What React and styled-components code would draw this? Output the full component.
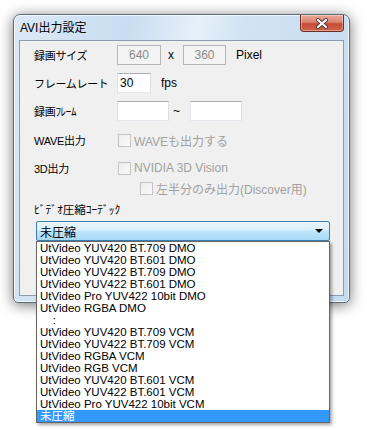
import React from 'react'
import styled, { createGlobalStyle } from 'styled-components'

const GlobalStyle = createGlobalStyle`
  html, body {
    margin: 0;
    padding: 0;
    background: #ffffff;
  }
  body {
    font-family: "Liberation Sans", "Noto Sans CJK JP", sans-serif;
    font-size: 12px;
    color: #000;
  }
`

const codecs = [
  'UtVideo YUV420 BT.709 DMO',
  'UtVideo YUV420 BT.601 DMO',
  'UtVideo YUV422 BT.709 DMO',
  'UtVideo YUV422 BT.601 DMO',
  'UtVideo Pro YUV422 10bit DMO',
  'UtVideo RGBA DMO',
  '\u00a0\u00a0\u00a0\u00a0:',
  'UtVideo YUV420 BT.709 VCM',
  'UtVideo YUV422 BT.709 VCM',
  'UtVideo RGBA VCM',
  'UtVideo RGB VCM',
  'UtVideo YUV420 BT.601 VCM',
  'UtVideo YUV422 BT.601 VCM',
  'UtVideo Pro YUV422 10bit VCM',
  '未圧縮',
]

export default function App() {
  return (
    <Stage>
      <GlobalStyle />
      <Window>
        <TitleBar>
          <Title>AVI出力設定</Title>
          <CloseButton aria-label='close'>
            <svg width="14" height="11" viewBox="0 0 14 11">
              <path d="M3 2 L11 9 M11 2 L3 9" stroke="#4a3a38" strokeWidth="4" strokeLinecap="round" />
              <path d="M3 2 L11 9 M11 2 L3 9" stroke="#ffffff" strokeWidth="2.2" strokeLinecap="round" />
            </svg>
          </CloseButton>
        </TitleBar>
        <Client>
          <Row $h={28}>
            <Label>録画サイズ</Label>
            <Field $w={44} $disabled $center>640</Field>
            <Sep $l={7} $r={9}>x</Sep>
            <Field $w={43} $disabled $center>360</Field>
            <Sep $l={10}>Pixel</Sep>
          </Row>
          <Row $h={28}>
            <Label>フレームレート</Label>
            <Field $w={34}>30</Field>
            <Sep $l={10}>fps</Sep>
          </Row>
          <Row $h={28}>
            <Label>録画ﾌﾚｰﾑ</Label>
            <Field $w={52} />
            <Sep $l={4} $r={10}>~</Sep>
            <Field $w={52} />
          </Row>
          <Row $h={30}>
            <Label>WAVE出力</Label>
            <Check>
              <Box />
              WAVEも出力する
            </Check>
          </Row>
          <Row $h={26}>
            <Label>3D出力</Label>
            <Check>
              <Box />
              NVIDIA 3D Vision
            </Check>
          </Row>
          <Row $h={14}>
            <Label />
            <Check $indent={22}>
              <Box />
              左半分のみ出力(Discover用)
            </Check>
          </Row>
          <CodecLabel>ﾋﾞﾃﾞｵ圧縮ｺｰﾃﾞｯｸ</CodecLabel>
          <Combo>
            <ComboText>未圧縮</ComboText>
            <Arrow />
            <DropList>
              {codecs.map((c, i) => (
                <Item key={i} $selected={i === codecs.length - 1}>{c}</Item>
              ))}
            </DropList>
          </Combo>
        </Client>
      </Window>
    </Stage>
  )
}

const Stage = styled.div`
  box-sizing: border-box;
  min-height: 430px;
  padding: 14px 0 0 13px;
`

const Window = styled.div`
  position: relative;
  box-sizing: border-box;
  width: 337px;
  height: 289px;
  border: 1px solid #5d6b7b;
  border-radius: 7px 7px 5px 5px;
  padding: 0 5px 6px 5px;
  display: flex;
  flex-direction: column;
  background: linear-gradient(100deg, #dbe9f6 0%, #c8ddf1 30%, #e6f0f9 48%, #d2e3f4 60%, #c4dbf0 100%);
  box-shadow: 0 2px 14px rgba(0, 0, 0, 0.55), inset 0 0 0 1px rgba(255, 255, 255, 0.7);
`

const TitleBar = styled.div`
  display: flex;
  align-items: flex-start;
  height: 25px;
`

const Title = styled.div`
  padding: 6px 0 0 1px;
  font-size: 12px;
  line-height: 14px;
  color: #000;
`

const CloseButton = styled.div`
  margin-left: auto;
  box-sizing: border-box;
  width: 44px;
  height: 17px;
  border: 1px solid #6e3026;
  border-top: none;
  border-radius: 0 0 4px 4px;
  display: flex;
  align-items: center;
  justify-content: center;
  background: linear-gradient(#eaa999 0%, #dc8470 45%, #c64a33 55%, #d2654d 100%);
  box-shadow: inset 0 0 0 1px rgba(255, 255, 255, 0.35);
`

const Client = styled.div`
  flex: 1;
  border: 1px solid #8d9cad;
  background: #f0f0f0;
  display: flex;
  flex-direction: column;
`

const Row = styled.div`
  display: flex;
  align-items: center;
  height: ${(p) => p.$h}px;
  padding-left: 14px;
`

const Label = styled.span`
  width: 83px;
  flex-shrink: 0;
  white-space: nowrap;
  font-size: 11px;
  letter-spacing: -0.3px;
`

const Field = styled.div`
  box-sizing: border-box;
  width: ${(p) => p.$w}px;
  height: 20px;
  line-height: 18px;
  padding: 0 2px;
  border: 1px solid ${(p) => (p.$disabled ? '#b5b5b5' : '#abadb3')};
  border-color: ${(p) => (p.$disabled ? '#b5b5b5' : '#abadb3 #dbdfe6 #e3e9ef #e2e3ea')};
  background: ${(p) => (p.$disabled ? '#f4f4f4' : '#ffffff')};
  color: ${(p) => (p.$disabled ? '#8a8a8a' : '#000')};
  text-align: ${(p) => (p.$center ? 'center' : 'left')};
`

const Sep = styled.span`
  margin-left: ${(p) => p.$l || 0}px;
  margin-right: ${(p) => p.$r || 0}px;
`

const Check = styled.div`
  display: flex;
  align-items: center;
  gap: 3px;
  margin-left: ${(p) => (p.$indent || 0) + 1}px;
  color: #a0a0a0;
  white-space: nowrap;
`

const Box = styled.span`
  box-sizing: border-box;
  width: 13px;
  height: 13px;
  border: 1px solid #c4c4c4;
  background: linear-gradient(135deg, #ececec, #fbfbfb);
`

const CodecLabel = styled.div`
  margin-top: 4px;
  height: 22px;
  line-height: 22px;
  padding-left: 14px;
  font-size: 11.5px;
`

const Combo = styled.div`
  position: relative;
  box-sizing: border-box;
  margin-left: 16px;
  width: 294px;
  height: 20px;
  border: 1px solid #3c7fb1;
  border-radius: 2px;
  display: flex;
  align-items: center;
  padding: 0 6px 0 3px;
  background: linear-gradient(#eaf6fd 0%, #d9f0fc 45%, #bee6fd 50%, #a7d9f5 100%);
`

const ComboText = styled.span`
  flex: 1;
  font-size: 12px;
`

const Arrow = styled.span`
  width: 0;
  height: 0;
  border-left: 4px solid transparent;
  border-right: 4px solid transparent;
  border-top: 4px solid #000;
`

const DropList = styled.div`
  position: absolute;
  top: 19px;
  left: -1px;
  box-sizing: border-box;
  width: 294px;
  border: 1px solid #646464;
  background: #ffffff;
  box-shadow: 2px 2px 3px rgba(0, 0, 0, 0.35);
  z-index: 5;
`

const Item = styled.div`
  height: 12px;
  line-height: 12px;
  padding-left: 3px;
  font-size: 11.5px;
  white-space: nowrap;
  background: ${(p) => (p.$selected ? '#3399ff' : 'transparent')};
  color: ${(p) => (p.$selected ? '#ffffff' : '#000')};
`
